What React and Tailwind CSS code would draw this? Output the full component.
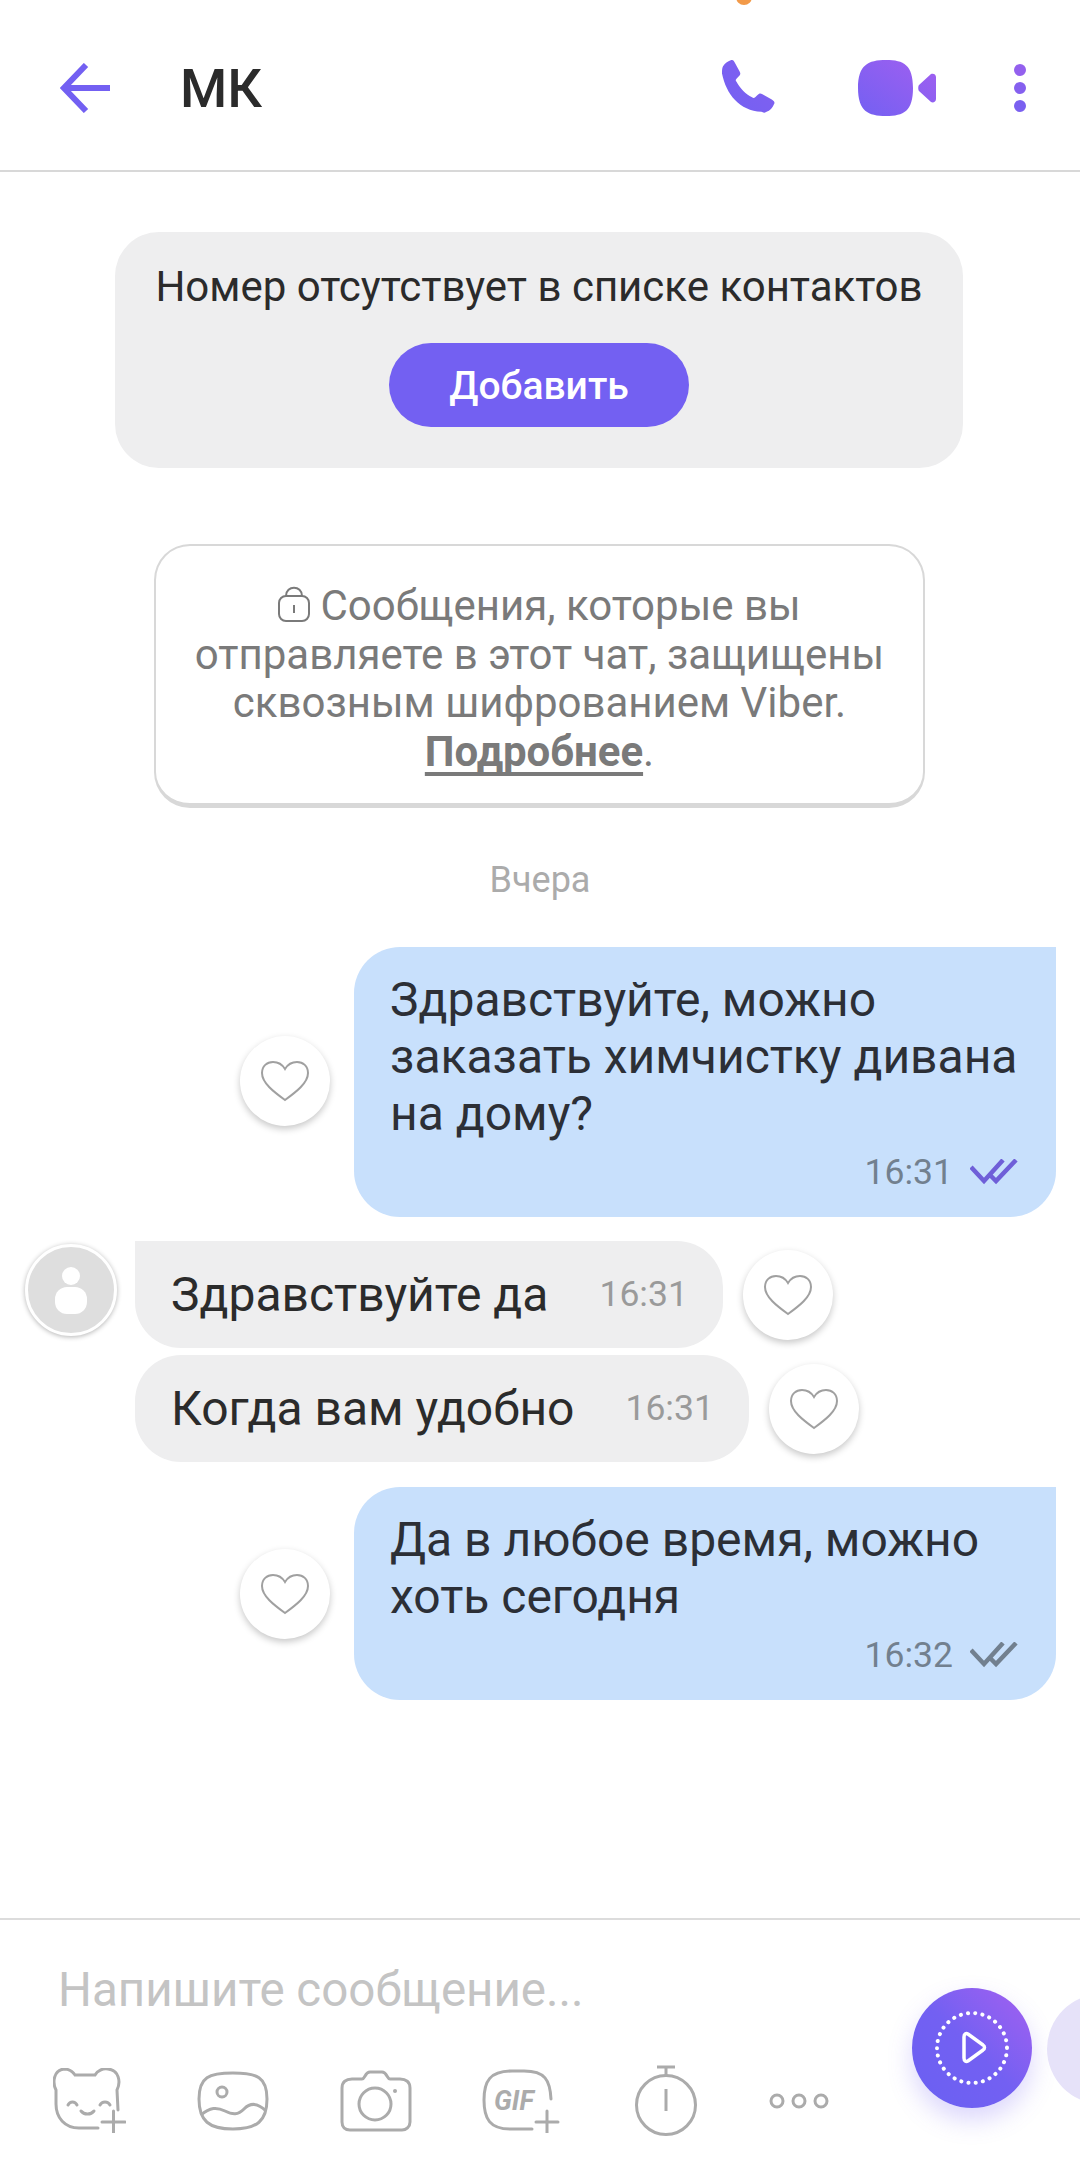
const font = { fontFamily: "Roboto, sans-serif" };

const ArrowBack = () => (
  <svg width="50" height="50" viewBox="0 0 50 50" fill="none" stroke="#7360f2" strokeWidth="6">
    <path d="M26 2 4 25l22 23M4 25h46" />
  </svg>
);

const PhoneIcon = () => (
  <svg width="56" height="56" viewBox="0 0 54 54">
    <defs>
      <linearGradient id="ph" x1="0" y1="1" x2="1" y2="0">
        <stop offset="0" stopColor="#7360f2" />
        <stop offset="1" stopColor="#8360f0" />
      </linearGradient>
    </defs>
    <path
      fill="url(#ph)"
      d="M1 6C3 3 6 1 9 0c1 0 2 0 3 2l5 9c1 2 1 3-1 5l-2 2c-1 1-1 2 0 3 3 6 9 12 15 15 1 1 2 1 3 0l2-2c2-2 3-2 5-1l9 5c3 2 3 3 2 5-1 3-4 6-7 7-1 1-3 1-5 0C17 49 4 33 0 13c0-3 0-5 1-7Z"
    />
  </svg>
);

const VideoIcon = () => (
  <svg width="78" height="56" viewBox="0 0 78 56">
    <defs>
      <linearGradient id="vd" x1="0" y1="1" x2="1" y2="0">
        <stop offset="0" stopColor="#7360f2" />
        <stop offset="1" stopColor="#a25ff0" />
      </linearGradient>
    </defs>
    <path
      fill="url(#vd)"
      d="M28 0C46 0 55 5 55 28S46 56 28 56 0 51 0 28 10 0 28 0ZM78 17v22c0 3-3 4-5 3L61 31c-1-1-1-5 0-6l12-11c2-1 5 0 5 3Z"
    />
  </svg>
);

const Heart = () => (
  <svg width="50" height="42" viewBox="0 0 50 42" fill="none" stroke="#a0a0a0" strokeWidth="2">
    <path d="M25 40C14 32 2 23 2 13 2 6 7 2 13 2c5 0 9 2 12 7 3-5 7-7 12-7 6 0 11 4 11 11 0 10-12 19-23 27Z" />
  </svg>
);

const HeartButton = () => (
  <div className="flex h-[90px] w-[90px] shrink-0 items-center justify-center rounded-full bg-white shadow-[0_3px_7px_rgba(0,0,0,0.22)]">
    <Heart />
  </div>
);

const DoubleCheck = ({ color }) => (
  <svg width="48" height="26" viewBox="0 0 48 26" fill="none" stroke={color} strokeWidth="4.5">
    <path d="M1 8l13 14L33 1M21 17l5 5L46 1" />
  </svg>
);

const OutBubble = ({ lines, time, check, heartTop, className }) => (
  <div className={`flex items-start justify-end pr-6 ${className}`}>
    <div className={`mr-6 ${heartTop}`}>
      <HeartButton />
    </div>
    <div className="w-[702px] rounded-[46px] rounded-tr-none bg-[#c8e0fc] pl-9 pr-[38px] pt-6 pb-[23px]">
      {lines.map((l) => (
        <div key={l} className="h-[57px] text-[48px] leading-[57px] whitespace-nowrap text-[#2c2f36]">
          {l}
        </div>
      ))}
      <div className="mt-2 flex items-center justify-end gap-[17px]">
        <span className="text-[35.5px] leading-[44px] text-[#72808f]">{time}</span>
        <DoubleCheck color={check} />
      </div>
    </div>
  </div>
);

const InBubble = ({ text, corner }) => (
  <div className="flex items-center gap-5">
    <div className={`flex h-[107px] items-center gap-[51px] rounded-[46px] bg-[#eeeeef] pl-9 pr-[35px] ${corner}`}>
      <span className="text-[48px] whitespace-nowrap text-[#2b2b2b]">{text}</span>
      <span className="text-[35.5px] text-[#9a9a9a]">16:31</span>
    </div>
    <HeartButton />
  </div>
);

const BearIcon = () => (
  <svg width="73" height="65" viewBox="0 0 73 65" fill="none" stroke="#ababab" strokeWidth="3" strokeLinecap="round">
    <path d="M45 60H26C12 60 3 50 3 36V22C-1 14 1 2 11 1c5 0 9 3 11 6h20c2-4 8-7 13-6 11 1 13 13 9 21l1 20" />
    <path d="M15 37c2-4 7-4 9 0M47 37c2-4 8-4 10 0M28 43c3 4 10 4 13 0" />
    <path d="M49 54h23M60.500 43v22" />
  </svg>
);

const ImageIcon = () => (
  <svg width="72" height="60" viewBox="0 0 72 60" fill="none" stroke="#ababab" strokeWidth="3">
    <path d="M36 2c24 0 34 4 34 26S60 58 36 58 2 50 2 28 12 2 36 2Z" />
    <circle cx="25" cy="21" r="5" />
    <path d="M4 44c9-8 16-8 24-4 8 4 13 4 19-2 7-7 14-6 22 2" />
  </svg>
);

const CameraIcon = () => (
  <svg width="72" height="62" viewBox="0 0 72 62" fill="none" stroke="#ababab" strokeWidth="3">
    <path d="M12 9h10c3 0 3-7 8-7h12c5 0 5 7 8 7h10c6 0 10 3 10 9v34c0 5-4 8-8 8H10c-5 0-8-3-8-8V18c0-6 4-9 10-9Z" />
    <circle cx="35" cy="34" r="16" />
    <circle cx="55" cy="21" r="2" fill="#ababab" stroke="none" />
  </svg>
);

const GifIcon = () => (
  <svg width="78" height="64" viewBox="0 0 78 64" fill="none" stroke="#ababab" strokeWidth="3" strokeLinecap="round">
    <path d="M50 60H28C8 60 2 50 2 31S8 2 30 2h12c21 0 26 9 27 28" />
    <path d="M54 53h22M65 42v22" />
    <text x="12" y="41" fill="#ababab" stroke="none" fontSize="27" fontWeight="700" fontStyle="italic" fontFamily="Roboto, sans-serif">
      GIF
    </text>
  </svg>
);

const TimerIcon = () => (
  <svg width="62" height="71" viewBox="0 0 62 71" fill="none" stroke="#ababab" strokeWidth="3">
    <path d="M22 2h18M31 2v9M31 24v22" />
    <circle cx="31" cy="40" r="29.500" />
  </svg>
);

const DotsIcon = () => (
  <svg width="60" height="16" viewBox="0 0 60 16" fill="none" stroke="#ababab" strokeWidth="3">
    <circle cx="8" cy="8" r="6" />
    <circle cx="30" cy="8" r="6" />
    <circle cx="52" cy="8" r="6" />
  </svg>
);

export default function App() {
  return (
    <div style={font} className="relative h-[2164px] w-[1080px] overflow-hidden bg-white">
      <div className="absolute left-[736px] top-[-11px] h-4 w-4 rounded-full bg-[#f29a49]" />

      {/* top bar */}
      <header className="flex h-[172px] items-center border-b-2 border-[#d8d8d8] pl-[60px] pt-[6px]">
        <ArrowBack />
        <h1 className="ml-[70px] text-[54px] font-medium text-[#2b2b2b]">МК</h1>
        <div className="ml-auto flex items-center">
          <PhoneIcon />
          <div className="ml-[80px]">
            <VideoIcon />
          </div>
          <div className="ml-[78px] mr-[54px] flex flex-col gap-[6px]">
            <span className="h-3 w-3 rounded-full bg-[#9360ee]" />
            <span className="h-3 w-3 rounded-full bg-[#8560ef]" />
            <span className="h-3 w-3 rounded-full bg-[#7a60f0]" />
          </div>
        </div>
      </header>

      <main className="h-[1746px] pt-[60px]">
        <section className="ml-[115px] flex h-[236px] w-[848px] flex-col items-center rounded-[44px] bg-[#eeeeef] pt-[30px]">
          <p className="text-[42px] leading-[50px] text-[#2b2b2b]">Номер отсутствует в списке контактов</p>
          <button className="mt-[31px] h-[84px] w-[300px] rounded-full bg-[#7360f2] pt-[3px] text-[39px] font-medium text-white">
            Добавить
          </button>
        </section>

        <section className="ml-[154px] mt-[76px] h-[264px] w-[771px] rounded-[36px] border-2 border-b-[5px] border-[#d8d8d8] pt-[36px] text-center text-[42px] leading-[48.7px] text-[#7a7a7a]">
          <p>
            <svg className="mr-[10px] inline-block align-[-2px]" width="32" height="36" viewBox="0 0 32 36" fill="none" stroke="#7a7a7a" strokeWidth="2">
              <rect x="1" y="10" width="30" height="25" rx="7" />
              <path d="M8 10c0-11 16-11 16 0M16 19v8" />
            </svg>
            Сообщения, которые вы
          </p>
          <p>отправляете в этот чат, защищены</p>
          <p>сквозным шифрованием Viber.</p>
          <p>
            <span className="font-bold underline underline-offset-[6px] [text-decoration-skip-ink:none]">Подробнее</span>.
          </p>
        </section>

        <div className="mt-[52px] text-center text-[36px] leading-[40px] text-[#ababab]">Вчера</div>

        <OutBubble
          className="mt-[47px]"
          heartTop="mt-[89px]"
          lines={["Здравствуйте, можно", "заказать химчистку дивана", "на дому?"]}
          time="16:31"
          check="#6f5fd8"
        />

        <div className="relative mt-6 flex flex-col gap-[7px] pl-[135px]">
          <div className="absolute left-[25px] top-[3px] h-[92px] w-[92px] rounded-full border-[3px] border-white bg-[#dedede] shadow-[0_1px_5px_rgba(0,0,0,0.3)]">
            <div className="mx-auto mt-[20px] h-[18px] w-[18px] rounded-full bg-white" />
            <div className="mx-auto mt-[2px] h-[27px] w-[32px] rounded-[12px] bg-white" />
          </div>
          <InBubble text="Здравствуйте да" corner="rounded-tl-none" />
          <InBubble text="Когда вам удобно" corner="" />
        </div>

        <OutBubble
          className="mt-[25px]"
          heartTop="mt-[62px]"
          lines={["Да в любое время, можно", "хоть сегодня"]}
          time="16:32"
          check="#72808f"
        />
      </main>

      {/* composer */}
      <footer className="relative border-t-2 border-[#dcdcdc] pl-[58px] pt-10">
        <div className="text-[47.5px] leading-[60px] text-[#c4c4c4]">Напишите сообщение...</div>
        <div className="mt-[45px] -ml-[5px] flex items-center">
          <BearIcon />
          <div className="ml-[71px]"><ImageIcon /></div>
          <div className="ml-[71px]"><CameraIcon /></div>
          <div className="ml-[70px]"><GifIcon /></div>
          <div className="ml-[75px]"><TimerIcon /></div>
          <div className="ml-[72px]"><DotsIcon /></div>
        </div>
        <div className="absolute left-[912px] top-[68px] flex h-[120px] w-[120px] items-center justify-center rounded-full bg-gradient-to-tr from-[#6a60f2] via-[#7360f2] to-[#a45ff0] shadow-[0_12px_24px_rgba(115,96,242,0.25)]">
          <svg width="76" height="76" viewBox="0 0 76 76" fill="none" stroke="#fff">
            <circle cx="38" cy="38" r="35" strokeWidth="4" strokeDasharray="0.1 7.2" strokeLinecap="round" />
            <path d="M30 27c0-3 2-4 4-3l15 11c2 1 2 4 0 5l-15 11c-2 1-4 0-4-3Z" strokeWidth="3.5" />
          </svg>
        </div>
        <div className="absolute left-[1047px] top-[74px] h-[110px] w-[110px] rounded-full bg-[#e6e2f9]" />
      </footer>
    </div>
  );
}
